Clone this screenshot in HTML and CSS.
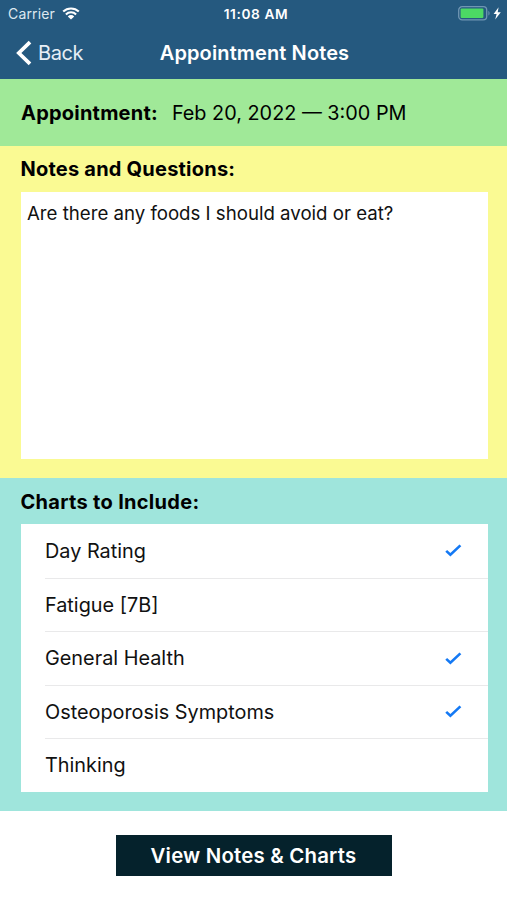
FILE: index.html
```html
<!DOCTYPE html>
<html lang="en">
<head>
    <meta charset="UTF-8">
    <meta name="viewport" content="width=device-width, initial-scale=1.0">
    <title>Appointment Notes</title>
    <link rel="stylesheet" href="styles.css">
</head>
<body>
    <header>
        <div class="status-bar">
            <div class="carrier">
                <span>Carrier</span>
                <svg class="wifi" viewBox="0 0 18 13" width="18" height="13">
                    <path d="M1.2 4.6a11.2 11.2 0 0 1 15.6 0M3.9 7.4a7.3 7.3 0 0 1 10.2 0" fill="none" stroke="#fff" stroke-width="2.1"/>
                    <path d="M9 12.6L5.8 9.4a4.6 4.6 0 0 1 6.4 0z" fill="#fff"/>
                </svg>
            </div>
            <span class="time">11:08 AM</span>
            <div class="battery">
                <svg viewBox="0 0 44 15" width="44" height="15">
                    <rect x="0.7" y="0.7" width="28" height="13.2" rx="3.4" fill="none" stroke="#7096b3" stroke-width="1.3"/>
                    <rect x="2.6" y="2.6" width="22.8" height="9.4" rx="1" fill="#4cd964"/>
                    <path d="M30.4 5v4.6c1.6-.6 1.6-4 0-4.6z" fill="#7096b3"/>
                    <path d="M40.6 1.2l-5 6.9h3l-1.4 5.5 5.6-7.4h-3.1z" fill="#fff"/>
                </svg>
            </div>
        </div>
        <nav class="nav-bar">
            <a class="back">
                <svg viewBox="0 0 16 26" width="16" height="26">
                    <path d="M14 2.1L2.8 13 14 23.9" fill="none" stroke="#fff" stroke-width="3.7"/>
                </svg>
                <span>Back</span>
            </a>
            <h1>Appointment Notes</h1>
        </nav>
    </header>

    <section class="appointment">
        <h2>Appointment:</h2>
        <p>Feb 20, 2022 — 3:00 PM</p>
    </section>

    <section class="notes">
        <h2>Notes and Questions:</h2>
        <div class="notes-text">Are there any foods I should avoid or eat?</div>
    </section>

    <section class="charts">
        <h2>Charts to Include:</h2>
        <ul class="chart-list">
            <li>
                <span>Day Rating</span>
                <svg class="check" viewBox="0 0 17 13" width="17" height="13"><path d="M1.2 6.9l4.2 3.9L15.4 1.4"/></svg>
            </li>
            <li>
                <span>Fatigue [7B]</span>
            </li>
            <li>
                <span>General Health</span>
                <svg class="check" viewBox="0 0 17 13" width="17" height="13"><path d="M1.2 6.9l4.2 3.9L15.4 1.4"/></svg>
            </li>
            <li>
                <span>Osteoporosis Symptoms</span>
                <svg class="check" viewBox="0 0 17 13" width="17" height="13"><path d="M1.2 6.9l4.2 3.9L15.4 1.4"/></svg>
            </li>
            <li>
                <span>Thinking</span>
            </li>
        </ul>
    </section>

    <footer>
        <button class="view-button">View Notes &amp; Charts</button>
    </footer>
</body>
</html>
```

FILE: styles.css
```css
* {
    box-sizing: border-box;
}
body {
    margin: 0;
    height: 900px;
    background-color: #fff;
    color: #000;
    font-family: Inter, "Liberation Sans", sans-serif;
    font-size: 19.85px;
    overflow: hidden;
}
h1, h2, p, ul {
    margin: 0;
    padding: 0;
}
header {
    height: 79px;
    background-color: #25597f;
    color: #fff;
}
.status-bar {
    display: grid;
    grid-template-columns: 1fr auto 1fr;
    align-items: center;
    height: 27px;
    padding: 0 5px 0 8px;
    font-size: 14px;
}
.carrier {
    display: flex;
    align-items: center;
    gap: 7px;
    color: #dde8f0;
    letter-spacing: 0.15px;
}
.time {
    padding-left: 2px;
    font-weight: 600;
    font-size: 13.7px;
    letter-spacing: 0.6px;
}
.battery {
    display: flex;
    justify-content: flex-end;
}
.nav-bar {
    display: grid;
    grid-template-columns: 1fr auto 1fr;
    align-items: center;
    height: 51px;
    padding: 0 16px;
}
.back {
    display: flex;
    align-items: center;
    gap: 6px;
    font-size: 20px;
    letter-spacing: -0.4px;
    color: #e6eff6;
}
h1 {
    padding-left: 2px;
    font-size: 20px;
    font-weight: 600;
    letter-spacing: 0.12px;
}
h2 {
    font-size: 20px;
    font-weight: 700;
    line-height: 24px;
    letter-spacing: 0.22px;
}
.appointment {
    display: flex;
    align-items: center;
    gap: 14px;
    height: 67px;
    padding: 0 21px;
    background-color: #a0e998;
}
.notes {
    height: 332px;
    padding: 11px 19.5px 0 20.5px;
    background-color: #fafa93;
}
.notes-text {
    height: 267px;
    margin-top: 11px;
    padding: 9px 6.5px;
    background-color: #fff;
    font-size: 18.65px;
    line-height: 24px;
    color: #111;
}
.charts {
    height: 333px;
    padding: 12px 19.5px 0 20.5px;
    background-color: #9fe5dc;
}
.charts h2 {
    letter-spacing: 0.3px;
}
.chart-list {
    display: grid;
    grid-template-rows: repeat(5, 1fr);
    height: 267.5px;
    margin-top: 10px;
    padding-left: 24.5px;
    background-color: #fff;
    list-style: none;
}
.chart-list li {
    display: flex;
    align-items: center;
    justify-content: space-between;
    padding-right: 26px;
    color: #111;
}
.chart-list li + li {
    border-top: 1px solid #e9e9ea;
}
.check path {
    fill: none;
    stroke: #1479f4;
    stroke-width: 2.6;
}
footer {
    display: flex;
    justify-content: center;
    padding-top: 24px;
}
.view-button {
    width: 276px;
    height: 41px;
    border: none;
    background-color: #05222c;
    color: #fff;
    font-family: inherit;
    font-size: 20.4px;
    font-weight: 600;
    letter-spacing: 0.2px;
}
```
